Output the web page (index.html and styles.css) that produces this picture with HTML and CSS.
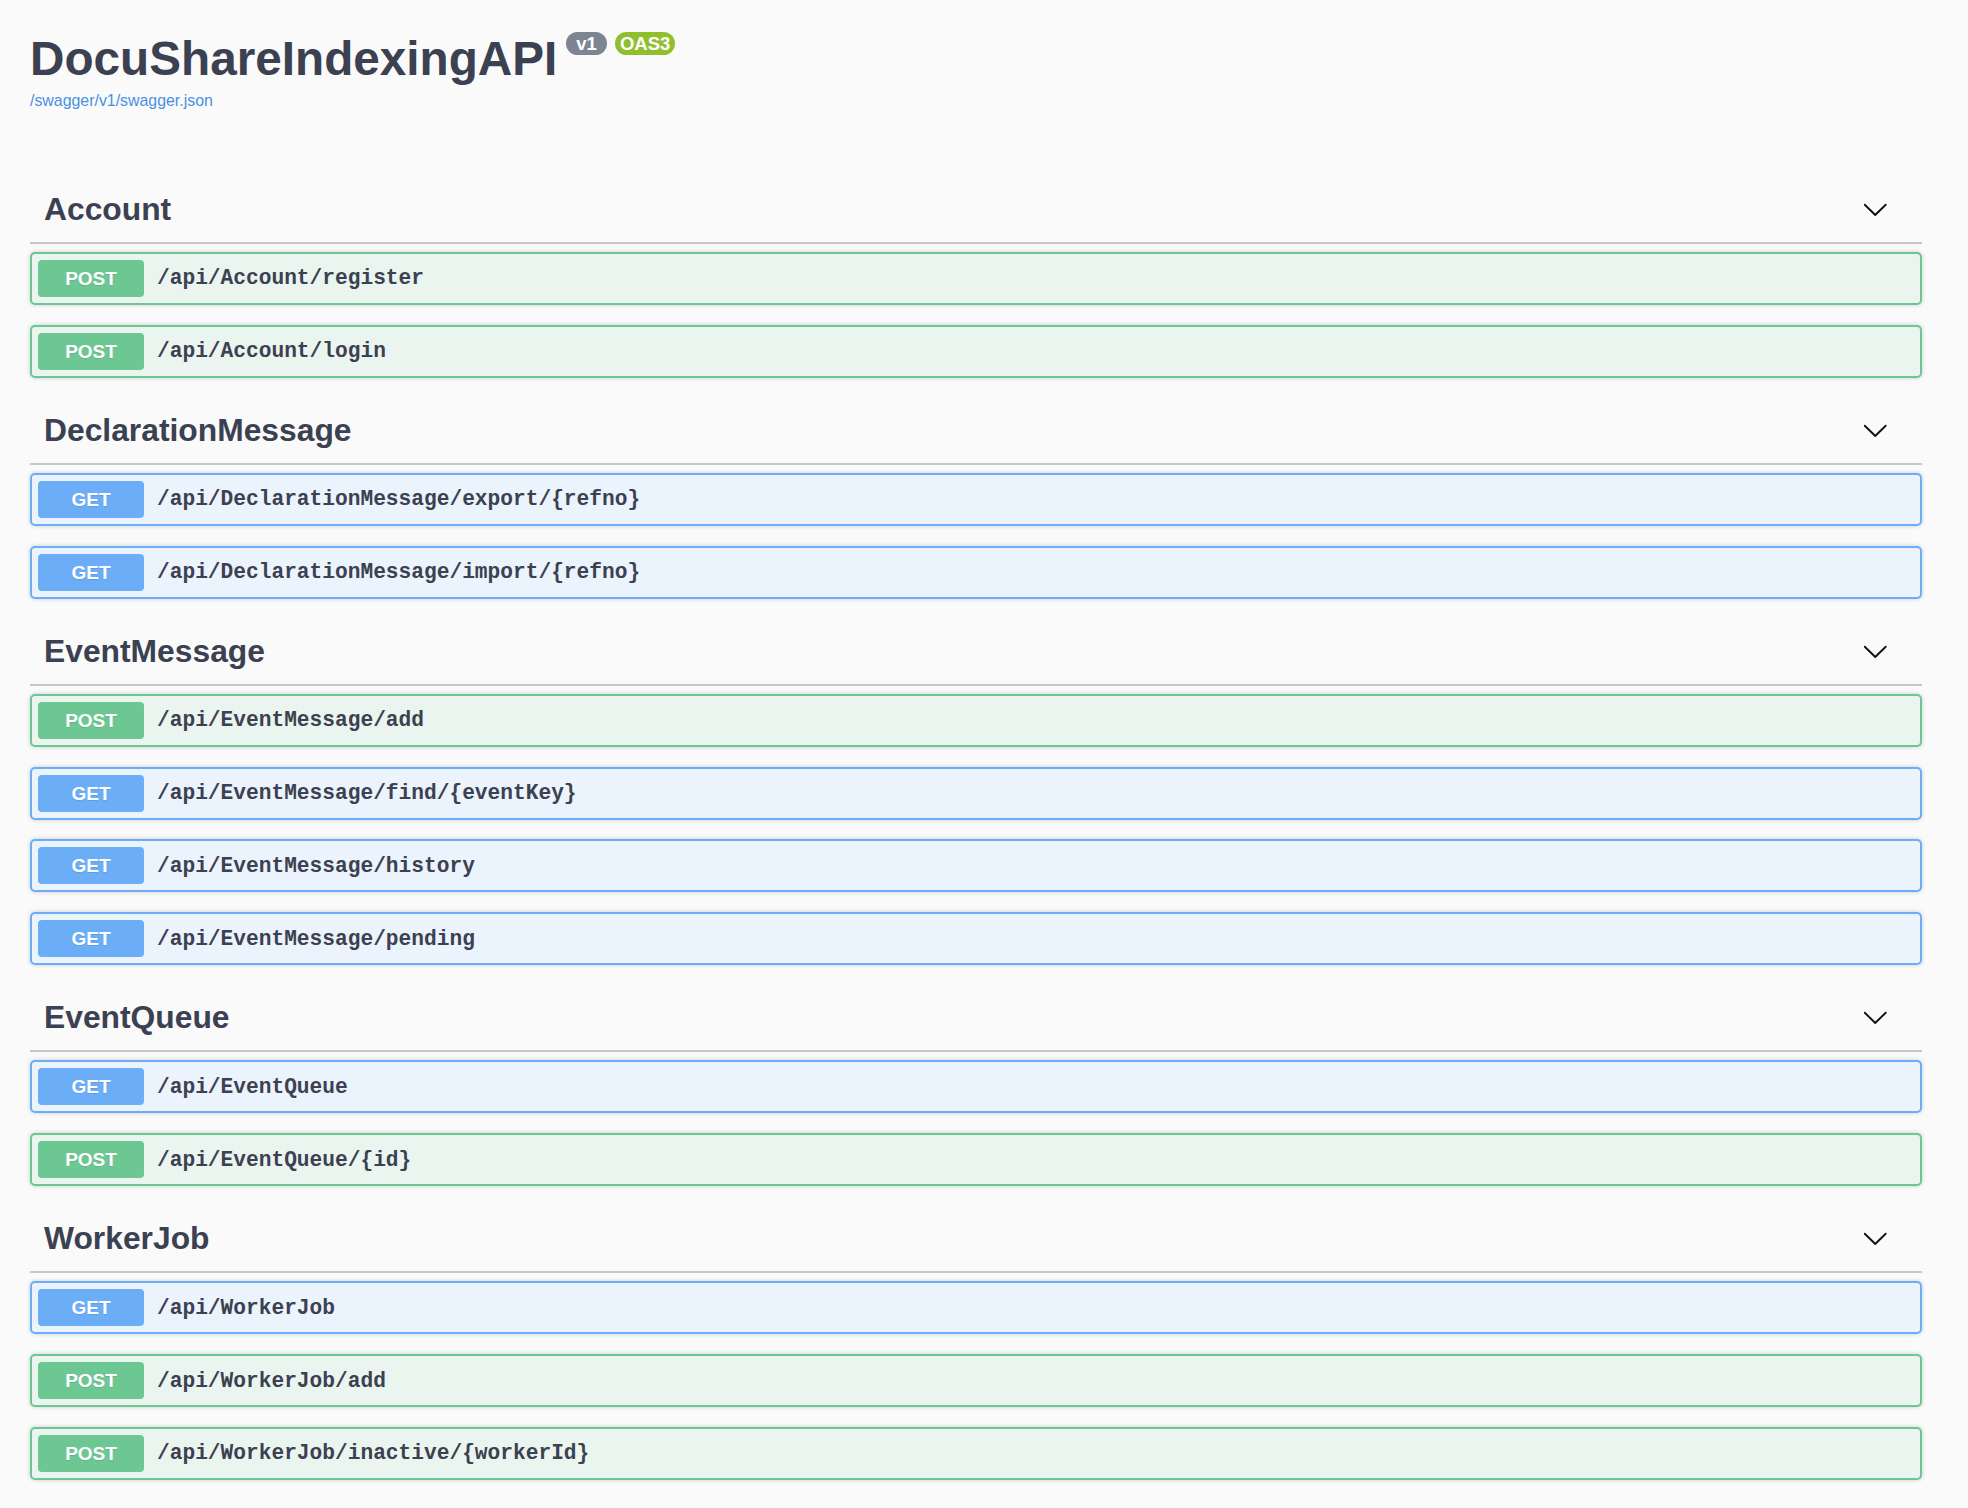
FILE: index.html
```html
<!DOCTYPE html>
<html lang="en">
<head>
<meta charset="utf-8">
<title>DocuShareIndexingAPI</title>
<link rel="stylesheet" href="styles.css">
</head>
<body>
<div class="wrapper">
  <div class="info">
    <h2 class="title"><span class="title-text">DocuShareIndexingAPI</span><span class="badge badge-version">v1</span><span class="badge badge-oas">OAS3</span></h2>
    <a class="spec-link" href="#">/swagger/v1/swagger.json</a>
  </div>

  <section class="tag-section">
    <h3 class="tag"><span class="tag-name">Account</span><svg class="chev" viewBox="0 0 20 20"><path d="M17.418 6.109c.272-.268.709-.268.979 0s.271.701 0 .969l-7.908 7.830c-.27.268-.707.268-.979 0l-7.908-7.830c-.27-.268-.27-.701 0-.969.271-.268.709-.268.979 0L10 13.250l7.418-7.141z"/></svg></h3>
    <div class="ops">
      <div class="op op-post"><span class="method">POST</span><span class="path">/api/Account/register</span></div>
      <div class="op op-post"><span class="method">POST</span><span class="path">/api/Account/login</span></div>
    </div>
  </section>

  <section class="tag-section">
    <h3 class="tag"><span class="tag-name">DeclarationMessage</span><svg class="chev" viewBox="0 0 20 20"><path d="M17.418 6.109c.272-.268.709-.268.979 0s.271.701 0 .969l-7.908 7.830c-.27.268-.707.268-.979 0l-7.908-7.830c-.27-.268-.27-.701 0-.969.271-.268.709-.268.979 0L10 13.250l7.418-7.141z"/></svg></h3>
    <div class="ops">
      <div class="op op-get"><span class="method">GET</span><span class="path">/api/DeclarationMessage/export/{refno}</span></div>
      <div class="op op-get"><span class="method">GET</span><span class="path">/api/DeclarationMessage/import/{refno}</span></div>
    </div>
  </section>

  <section class="tag-section">
    <h3 class="tag"><span class="tag-name">EventMessage</span><svg class="chev" viewBox="0 0 20 20"><path d="M17.418 6.109c.272-.268.709-.268.979 0s.271.701 0 .969l-7.908 7.830c-.27.268-.707.268-.979 0l-7.908-7.830c-.27-.268-.27-.701 0-.969.271-.268.709-.268.979 0L10 13.250l7.418-7.141z"/></svg></h3>
    <div class="ops">
      <div class="op op-post"><span class="method">POST</span><span class="path">/api/EventMessage/add</span></div>
      <div class="op op-get"><span class="method">GET</span><span class="path">/api/EventMessage/find/{eventKey}</span></div>
      <div class="op op-get"><span class="method">GET</span><span class="path">/api/EventMessage/history</span></div>
      <div class="op op-get"><span class="method">GET</span><span class="path">/api/EventMessage/pending</span></div>
    </div>
  </section>

  <section class="tag-section">
    <h3 class="tag"><span class="tag-name">EventQueue</span><svg class="chev" viewBox="0 0 20 20"><path d="M17.418 6.109c.272-.268.709-.268.979 0s.271.701 0 .969l-7.908 7.830c-.27.268-.707.268-.979 0l-7.908-7.830c-.27-.268-.27-.701 0-.969.271-.268.709-.268.979 0L10 13.250l7.418-7.141z"/></svg></h3>
    <div class="ops">
      <div class="op op-get"><span class="method">GET</span><span class="path">/api/EventQueue</span></div>
      <div class="op op-post"><span class="method">POST</span><span class="path">/api/EventQueue/{id}</span></div>
    </div>
  </section>

  <section class="tag-section">
    <h3 class="tag"><span class="tag-name">WorkerJob</span><svg class="chev" viewBox="0 0 20 20"><path d="M17.418 6.109c.272-.268.709-.268.979 0s.271.701 0 .969l-7.908 7.830c-.27.268-.707.268-.979 0l-7.908-7.830c-.27-.268-.27-.701 0-.969.271-.268.709-.268.979 0L10 13.250l7.418-7.141z"/></svg></h3>
    <div class="ops">
      <div class="op op-get"><span class="method">GET</span><span class="path">/api/WorkerJob</span></div>
      <div class="op op-post"><span class="method">POST</span><span class="path">/api/WorkerJob/add</span></div>
      <div class="op op-post"><span class="method">POST</span><span class="path">/api/WorkerJob/inactive/{workerId}</span></div>
    </div>
  </section>
</div>
</body>
</html>
```

FILE: styles.css
```css
html, body {
  margin: 0;
  padding: 0;
  background: #fafafa;
}

body {
  font-family: "Liberation Sans", Arial, sans-serif;
  color: #3b4151;
}

.wrapper {
  padding: 0 46px 0 30px;
}

.info {
  padding-top: 30.7px;
  margin-bottom: 66.8px;
}

.title {
  display: flex;
  align-items: flex-start;
  margin: 0;
  font-size: 47.7px;
  font-weight: 700;
  color: #3b4151;
}

.title-text {
  line-height: 55px;
}

.badge {
  margin-top: 1px;
  margin-left: 9px;
  padding: 2px 10px;
  border-radius: 57px;
  font-size: 18.5px;
  line-height: 19px;
  font-weight: 700;
  color: #fff;
}

.badge-version {
  background: #7d8492;
}

.badge-oas {
  margin-left: 8px;
  padding: 2px 5px;
  background: #8fbf2c;
}

.spec-link {
  display: block;
  margin-top: 6px;
  font-size: 15.9px;
  line-height: 18px;
  color: #4990e2;
  text-decoration: none;
}

.tag {
  display: flex;
  align-items: center;
  margin: 0 0 8px;
  padding: 13.5px 34px 13.5px 14px;
  border-bottom: 2px solid #c6c7cb;
  font-size: 31.8px;
  line-height: 38.5px;
  font-weight: 700;
  color: #3b4151;
}

.tag-name {
  flex: 1;
}

.chev {
  width: 26.5px;
  height: 26.5px;
  fill: #111;
}

.op {
  display: flex;
  align-items: center;
  margin-bottom: 19.75px;
  padding: 6px;
  border: 2px solid;
  border-radius: 5px;
  box-shadow: 0 0 4px rgba(0, 0, 0, 0.19);
}

.op-post {
  border-color: #6cc793;
  background: #ebf5ef;
}

.op-get {
  border-color: #6baef7;
  background: #ebf3fc;
}

.method {
  min-width: 106px;
  padding: 8px 0;
  border-radius: 4px;
  font-size: 19px;
  line-height: 21px;
  font-weight: 700;
  text-align: center;
  color: #fff;
  text-shadow: 0 1px 0 rgba(0, 0, 0, 0.1);
}

.op-post .method {
  background: #6cc793;
}

.op-get .method {
  background: #6baef7;
}

.path {
  padding: 0 13px;
  font-family: "Liberation Mono", "Courier New", monospace;
  font-size: 21.2px;
  font-weight: 700;
  color: #3b4151;
}
```
